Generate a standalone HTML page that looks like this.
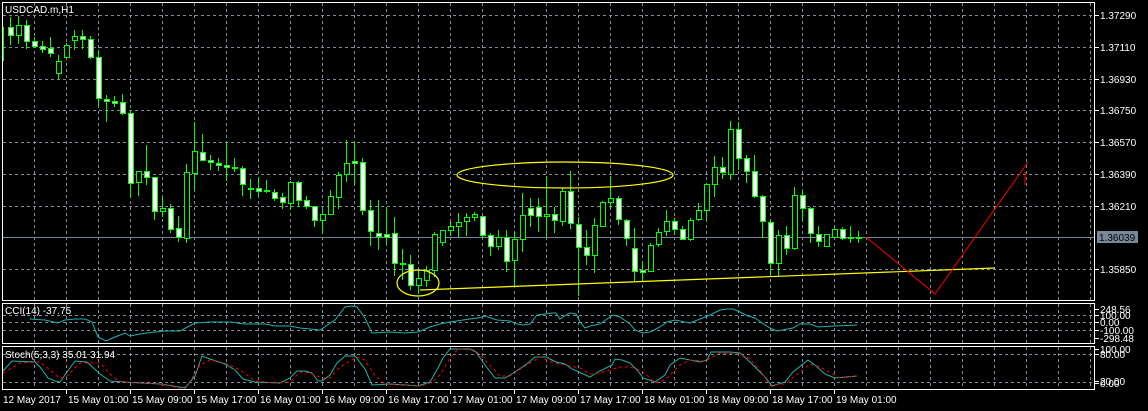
<!DOCTYPE html>
<html><head><meta charset="utf-8"><style>
html,body{margin:0;padding:0;background:#000;width:1148px;height:411px;overflow:hidden}
svg{display:block}
text{font-family:"Liberation Sans",sans-serif;font-size:10px;fill:#fff}
</style></head><body>
<svg id="s" width="1148" height="411" viewBox="0 0 1148 411" shape-rendering="crispEdges"></svg>
<script>
const s=document.getElementById('s');let h='';
const G='#7f8c9c';
// grid verticals
for(let x=34;x<1095;x+=32){
 h+=`<line x1="${x+.5}" y1="3" x2="${x+.5}" y2="300" stroke="${G}" stroke-dasharray="3,3"/>`;
 h+=`<line x1="${x+.5}" y1="304" x2="${x+.5}" y2="343" stroke="${G}" stroke-dasharray="3,3"/>`;
 h+=`<line x1="${x+.5}" y1="347" x2="${x+.5}" y2="389" stroke="${G}" stroke-dasharray="3,3"/>`;
}
const py=[15,47,79,110,142,174,206,269],pl=['1.37290','1.37110','1.36930','1.36750','1.36570','1.36390','1.36210','1.35850'];
py.forEach((y,i)=>{h+=`<line x1="3" y1="${y+.5}" x2="1095" y2="${y+.5}" stroke="${G}" stroke-dasharray="3,3"/><line x1="1095" y1="${y+.5}" x2="1099" y2="${y+.5}" stroke="#fff"/><text x="1100" y="${y+4}">${pl[i]}</text>`});
[315,322,330].forEach(y=>h+=`<line x1="3" y1="${y+.5}" x2="1095" y2="${y+.5}" stroke="${G}" stroke-dasharray="3,3"/>`);
[354,382].forEach(y=>h+=`<line x1="3" y1="${y+.5}" x2="1095" y2="${y+.5}" stroke="${G}" stroke-dasharray="3,3"/>`);
// bid line
h+=`<line x1="3" y1="237.5" x2="1095" y2="237.5" stroke="#778899"/>`;
// candles [x, hi, top, bot, lo, filled]
const c=[[10,17,27,35,45,1],[18,16,25,35,44,0],[26,20,25,41,49,1],[34,37,41,46,47,1],[42,41,46,49,53,1],[50,37,48,53,57,1],[58,55,61,73,79,0],[66,43,45,57,58,0],[74,30,36,40,50,0],[82,30,36,39,49,1],[90,36,39,57,59,1],[98,50,57,98,106,1],
[106,95,99,101,122,1],[114,96,101,103,107,1],[122,94,102,113,115,1],[130,110,113,183,198,1],[138,171,171,182,196,0],[146,145,171,177,185,1],[154,177,177,211,220,1],[162,197,208,211,217,0],[170,204,208,229,233,1],[178,216,228,237,242,1],[186,164,172,238,243,0],[194,122,151,173,190,0],[202,134,152,160,161,1],[210,155,160,162,170,1],[218,158,163,165,171,1],[226,143,165,167,181,1],[234,158,167,168,172,1],[242,166,168,184,196,1],[250,179,188,189,199,1],[258,177,188,191,196,1],[266,180,190,191,193,1],[274,189,192,198,201,1],[282,193,197,202,209,1],[290,181,182,203,210,0],[298,181,182,200,207,1],[306,196,200,206,209,1],[314,206,206,220,227,1],[322,210,214,220,234,0],[330,190,196,214,215,0],[338,172,175,197,209,0],[346,140,163,174,182,0],[354,142,161,163,184,1],[362,158,162,210,215,1],[370,200,210,231,246,1],[378,200,233,236,250,1],[386,207,234,237,243,1],[394,217,233,263,276,1],[402,249,263,264,280,1],[410,255,264,285,290,1],[418,270,278,285,294,0],[426,266,270,280,287,0],[434,232,234,270,277,0],[442,230,230,242,246,0],
[450,222,226,230,236,0],[458,213,222,226,237,0],[466,213,217,221,236,0],[474,212,214,217,221,0],[482,216,216,235,238,1],[490,233,235,246,256,1],[498,230,237,246,250,0],[506,230,237,261,272,1],[514,232,239,260,287,0],[522,193,215,239,252,0],[530,198,208,215,227,1],[538,198,207,216,232,1],[546,176,214,216,237,0],[554,207,214,220,233,1],[562,188,191,221,226,0],[570,171,191,223,229,1],[578,217,224,247,296,1],[586,230,247,255,265,1],[594,218,225,255,273,0],[602,201,202,226,226,0],[610,176,198,202,208,0],[618,196,198,219,225,1],[626,219,220,238,246,1],[634,228,248,271,281,1],[642,261,270,272,281,1],[650,243,245,271,271,0],[658,228,232,244,247,0],[666,210,221,231,236,0],[674,218,221,229,235,1],[682,226,229,239,240,1],[690,218,220,239,241,0],[698,203,210,219,221,0],[706,183,184,210,221,0],[714,156,167,184,197,0],[722,157,167,172,179,1],[730,121,129,174,180,0],[738,122,129,158,170,1],[746,155,158,171,183,1],[754,155,171,196,198,1],[762,195,196,221,238,1],[770,220,222,263,275,1],[778,230,235,263,277,0],[786,226,235,248,255,1],[794,187,195,248,250,0],[802,191,195,208,221,1],[810,207,208,233,243,1],[818,226,234,241,247,1],[826,234,234,246,247,0],[834,228,229,237,238,0],[842,227,229,238,240,1],[850,226,237,238,243,1],[858,231,237,238,243,1]];
h+=`<line x1="3.5" y1="27" x2="3.5" y2="61" stroke="#00ff00"/>`;
c.forEach(([x,hi,t,b,lo,f])=>{
 h+=`<line x1="${x+.5}" y1="${hi}" x2="${x+.5}" y2="${lo}" stroke="#00ff00"/>`;
 if(b-t<1)h+=`<line x1="${x-2}" y1="${t+.5}" x2="${x+3}" y2="${t+.5}" stroke="#00ff00"/>`;
 else h+=`<rect x="${x-2+.5}" y="${t+.5}" width="5" height="${b-t}" fill="${f?'#fff':'#000'}" stroke="#00ff00"/>`;
});
// objects
h+=`<g shape-rendering="auto" fill="none" stroke="#ffff00" stroke-width="1.2"><ellipse cx="418" cy="283" rx="21" ry="13"/><ellipse cx="565" cy="175" rx="108" ry="13"/><line x1="420" y1="290" x2="995" y2="268"/></g>`;
h+=`<g shape-rendering="auto" fill="none" stroke="#ff0000" stroke-width="1"><polyline points="866,237 935,294 1028,162"/><line x1="1025" y1="172" x2="1025" y2="185"/></g>`;
// bid label
h+=`<rect x="1097" y="231" width="41" height="12" fill="#778899"/><text x="1099" y="241" style="fill:#000">1.36039</text>`;
// CCI
const cci=[[30,319],[45,320],[58,323],[65,320],[75,319],[85,319],[92,322],[98,337],[106,341],[115,337],[125,333],[130,336],[140,334],[155,332],[165,331],[180,331],[195,323],[210,322],[230,322],[245,324],[265,324],[275,326],[290,326],[300,328],[320,330],[335,320],[345,307],[352,306],[357,307],[365,318],[372,333],[390,332],[405,333],[418,332],[430,327],[440,324],[450,322],[470,319],[478,318],[485,316],[497,320],[510,321],[517,324],[523,325],[530,324],[537,315],[553,313],[556,313],[560,319],[566,315],[570,313],[576,314],[580,322],[585,328],[590,326],[600,324],[610,317],[613,315],[620,317],[630,324],[635,330],[643,333],[650,332],[660,327],[667,322],[675,320],[690,323],[700,319],[710,315],[720,310],[727,309],[733,309],[740,312],[748,316],[755,318],[762,323],[770,328],[777,331],[793,328],[800,324],[810,324],[818,327],[835,326],[857,325]];
const st=[[3,371],[12,361],[35,362],[40,367],[48,378],[55,381],[60,382],[67,372],[75,361],[87,362],[100,374],[110,381],[125,382],[160,384],[185,388],[195,376],[202,356],[210,359],[225,364],[235,370],[243,379],[255,382],[280,383],[290,378],[297,371],[305,371],[312,373],[318,381],[322,381],[330,375],[337,363],[345,356],[355,356],[365,369],[372,385],[390,384],[405,385],[418,386],[430,382],[438,368],[443,358],[450,349],[470,349],[476,352],[485,365],[495,378],[505,378],[515,372],[528,363],[535,357],[546,357],[556,362],[565,364],[572,369],[590,377],[598,372],[612,365],[615,359],[622,360],[630,363],[638,371],[643,378],[655,382],[665,375],[670,365],[680,358],[700,362],[707,360],[711,352],[730,352],[740,353],[750,362],[765,377],[772,386],[785,382],[793,372],[808,360],[816,366],[825,374],[835,378],[857,376]];
const sg=[[3,373],[20,363],[40,362],[50,370],[58,377],[65,378],[80,363],[100,363],[110,374],[118,381],[135,383],[160,384],[180,388],[187,386],[200,365],[210,360],[225,363],[240,370],[255,381],[275,383],[290,382],[300,372],[310,373],[322,378],[330,378],[340,367],[357,357],[365,360],[375,376],[385,384],[420,386],[430,383],[440,375],[450,358],[458,349],[475,350],[482,357],[500,376],[510,376],[522,368],[540,357],[555,363],[580,368],[590,374],[600,373],[620,367],[630,367],[640,370],[650,378],[655,383],[665,380],[680,365],[690,360],[705,361],[720,353],[740,354],[750,359],[762,373],[770,385],[785,384],[795,376],[810,364],[820,367],[840,378],[857,376]];
const P=a=>a.map(p=>p.join(',')).join(' ');
h+=`<g shape-rendering="auto" fill="none"><polyline points="${P(cci)}" stroke="#20b2aa"/><polyline points="${P(st)}" stroke="#20b2aa"/><polyline points="${P(sg)}" stroke="#ff0000" stroke-dasharray="3,3"/></g>`;
// borders
h+=`<g fill="none" stroke="#fff"><rect x="2.5" y="2.5" width="1092" height="298"/><rect x="2.5" y="303.5" width="1092" height="40"/><rect x="2.5" y="346.5" width="1092" height="43"/></g>`;
// sub labels
h+=`<text x="5" y="314">CCI(14) -37.75</text><text x="5" y="358">Stoch(5,3,3) 35.01 31.94</text><text x="5" y="13">USDCAD.m,H1</text>`;
[[309,'248.56'],[315,'100.00'],[322,'0.00'],[330,'-100.00'],[338,'-298.48'],[349,'100.00'],[354,'80.00'],[381,'20.00'],[383,'0.00']].forEach(([y,t])=>{h+=`<line x1="1095" y1="${y+.5}" x2="1099" y2="${y+.5}" stroke="#fff"/><text x="1100" y="${y+4}">${t}</text>`});
// time axis
const tl=['15 May 01:00','15 May 09:00','15 May 17:00','16 May 01:00','16 May 09:00','16 May 17:00','17 May 01:00','17 May 09:00','17 May 17:00','18 May 01:00','18 May 09:00','18 May 17:00','19 May 01:00'];
h+=`<text x="3" y="403">12 May 2017</text>`;
tl.forEach((t,i)=>{const x=66+64*i;h+=`<line x1="${x+.5}" y1="390" x2="${x+.5}" y2="394" stroke="#fff"/><text x="${x+2}" y="403">${t}</text>`});
s.innerHTML=h;
</script>
</body></html>
